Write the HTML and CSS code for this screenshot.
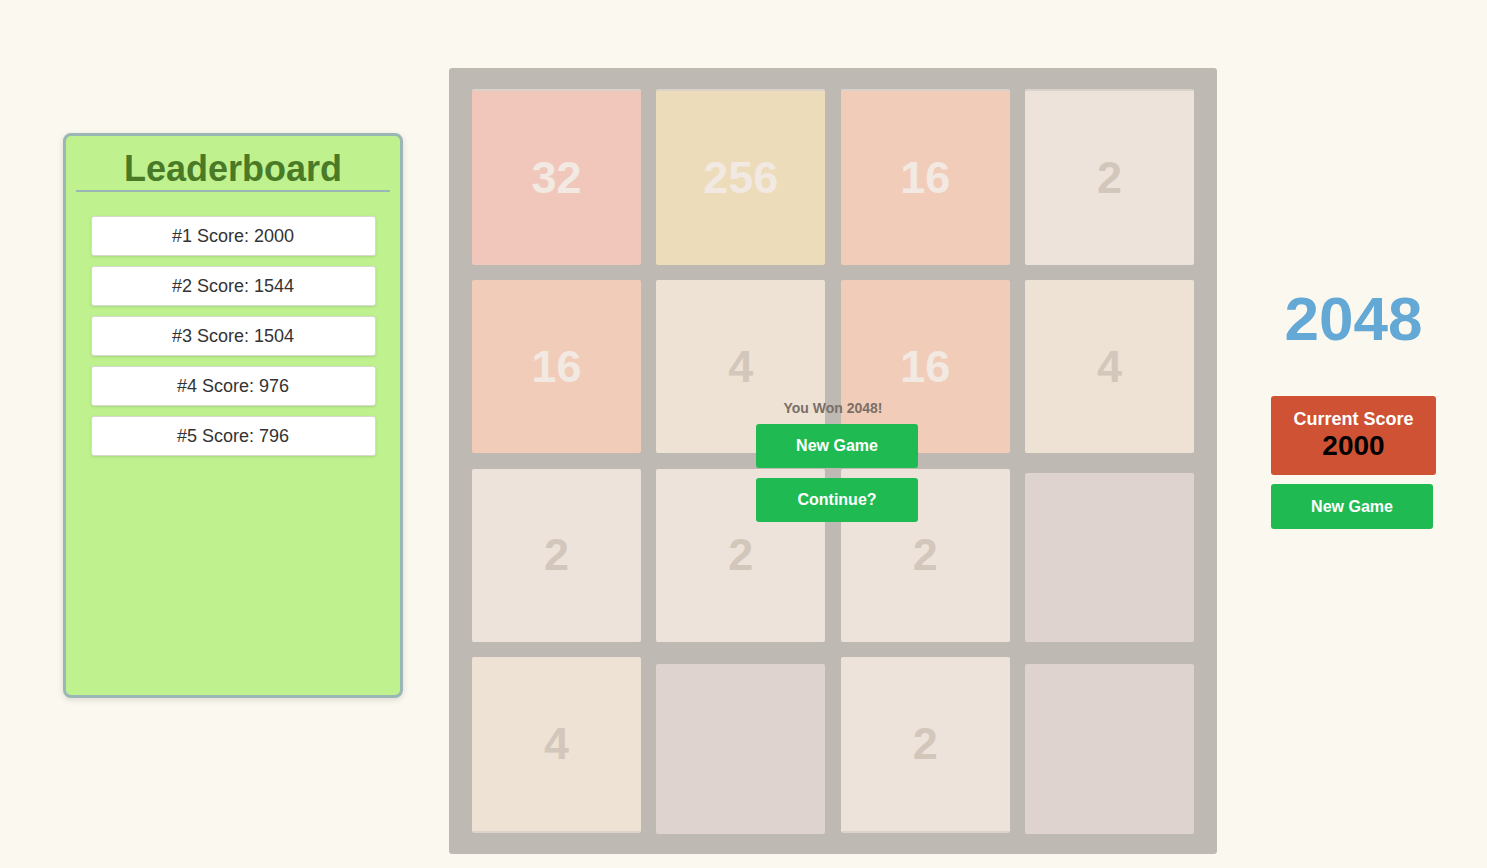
FILE: index.html
```html
<!DOCTYPE html>
<html>
<head>
<meta charset="utf-8">
<title>2048</title>
<link rel="stylesheet" href="styles.css">
</head>
<body>
<div class="page">
  <aside class="leaderboard">
    <h2 class="lb-title">Leaderboard</h2>
    <ul class="lb-list">
      <li class="lb-item">#1 Score: 2000</li>
      <li class="lb-item">#2 Score: 1544</li>
      <li class="lb-item">#3 Score: 1504</li>
      <li class="lb-item">#4 Score: 976</li>
      <li class="lb-item">#5 Score: 796</li>
    </ul>
  </aside>

  <main class="board">
    <div class="grid">
      <div class="cell t32 top">32</div>
      <div class="cell t256 top">256</div>
      <div class="cell t16 top">16</div>
      <div class="cell t2 top">2</div>

      <div class="cell t16">16</div>
      <div class="cell t4">4</div>
      <div class="cell t16">16</div>
      <div class="cell t4">4</div>

      <div class="cell t2">2</div>
      <div class="cell t2">2</div>
      <div class="cell t2">2</div>
      <div class="cell empty e3"></div>

      <div class="cell t4 bottom">4</div>
      <div class="cell empty e4"></div>
      <div class="cell t2 bottom">2</div>
      <div class="cell empty e4"></div>
    </div>
    <div class="overlay">
      <p class="won">You Won 2048!</p>
      <button class="btn overlay-btn">New Game</button>
      <button class="btn overlay-btn">Continue?</button>
    </div>
  </main>

  <section class="side">
    <h1 class="logo">2048</h1>
    <div class="score">
      <div class="score-label">Current Score</div>
      <div class="score-value">2000</div>
    </div>
    <button class="btn side-btn">New Game</button>
  </section>
</div>
</body>
</html>
```

FILE: styles.css
```css
* { box-sizing: border-box; }

html, body {
  margin: 0;
  padding: 0;
  background: #fbf8ef;
  font-family: "Liberation Sans", Arial, sans-serif;
}

.page {
  display: flex;
  align-items: flex-start;
  padding-left: 63px;
  height: 868px;
  overflow: hidden;
}

/* Leaderboard */
.leaderboard {
  width: 340px;
  height: 565px;
  margin-top: 133px;
  background: #bff28f;
  border: 3px solid #9ab7b5;
  border-radius: 8px;
  box-shadow: 0 2px 6px rgba(0,0,0,0.12);
  padding: 12px 10px 0;
}

.lb-title {
  margin: 0;
  font-size: 36px;
  line-height: 42px;
  font-weight: bold;
  color: #4b7a27;
  text-align: center;
  border-bottom: 2px solid #9ab7b5;
}

.lb-list {
  list-style: none;
  margin: 24px 0 0;
  padding: 0;
  display: flex;
  flex-direction: column;
  align-items: center;
  gap: 10px;
}

.lb-item {
  width: 285px;
  height: 40px;
  background: #fff;
  border: 1px solid #d5dccf;
  border-radius: 3px;
  box-shadow: 0 1px 3px rgba(0,0,0,0.12);
  font-size: 18px;
  color: #333;
  display: flex;
  align-items: center;
  justify-content: center;
}

/* Board */
.board {
  position: relative;
  margin-left: 46px;
  margin-top: 68px;
  width: 768px;
  height: 786px;
  background: #bfb9b4;
  border-radius: 3px;
  padding: 21px 23px 20px;
}

.grid {
  display: grid;
  grid-template-columns: 169px 169px 169px 169px;
  grid-template-rows: 176px 173px 173px 176px;
  column-gap: 15.33px;
  row-gap: 15.33px;
}

.cell {
  display: flex;
  align-items: center;
  justify-content: center;
  font-size: 45px;
  font-weight: bold;
  border-radius: 2px;
}

.cell.top { border-top: 2px solid #dbd2cc; }
.cell.bottom { border-bottom: 2px solid #dcd2ca; }

.t32 { background: #f2c7bb; color: #f1e9e2; }
.t256 { background: #ecdcb9; color: #f1e9e2; }
.t16 { background: #f1cdb9; color: #f1e9e2; }
.t2 { background: #ede3da; color: #d3c7bc; }
.t4 { background: #eee2d4; color: #d3c7bc; }

.empty { background: #ded3cf; }
.e3 { margin-top: 4px; }
.e4 { margin-top: 7px; margin-bottom: -1px; }

.overlay {
  position: absolute;
  inset: 0;
  display: flex;
  flex-direction: column;
  align-items: center;
  justify-content: center;
}

.won {
  margin: 0 0 8px;
  font-size: 14px;
  line-height: 16px;
  font-weight: bold;
  color: #7a6f67;
}

.btn {
  border: none;
  background: #1fbb52;
  color: #fff;
  font-family: "Liberation Sans", Arial, sans-serif;
  font-weight: bold;
  font-size: 16px;
  border-radius: 3px;
  cursor: pointer;
}

.overlay-btn {
  width: 162px;
  height: 44px;
  margin-left: 8px;
}

.overlay-btn + .overlay-btn { margin-top: 10px; }

/* Side */
.side {
  margin-left: 54px;
  width: 165px;
  margin-top: 280px;
}

.logo {
  margin: 0 0 38px;
  font-size: 62px;
  line-height: 78px;
  font-weight: bold;
  color: #64a8d5;
  text-align: center;
}

.score {
  height: 79px;
  background: #d05235;
  border-radius: 3px;
  padding-top: 12px;
  text-align: center;
}

.score-label {
  font-size: 18px;
  line-height: 22px;
  font-weight: bold;
  color: #fff;
}

.score-value {
  font-size: 28px;
  line-height: 32px;
  font-weight: bold;
  color: #000;
}

.side-btn {
  display: block;
  margin-top: 9px;
  width: 162px;
  height: 45px;
}
```
